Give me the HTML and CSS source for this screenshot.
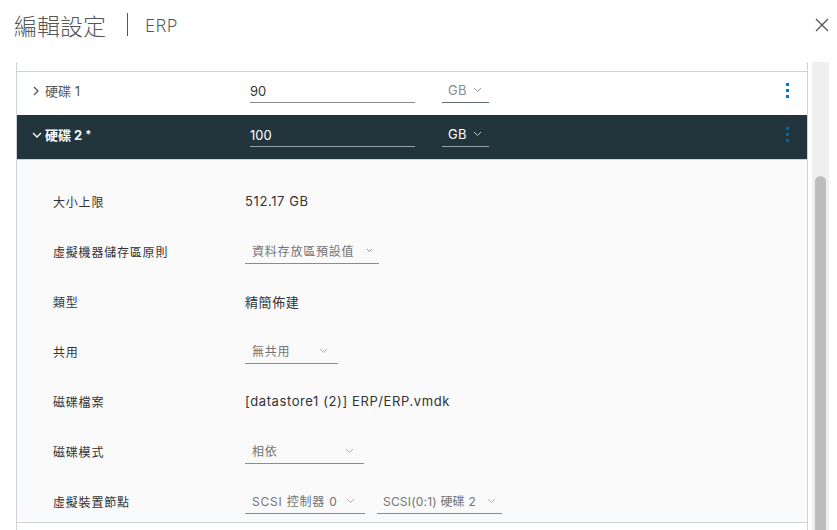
FILE: index.html
```html
<!DOCTYPE html>
<html lang="zh-Hant">
  <head>
    <meta charset="UTF-8" />
    <meta name="viewport" content="width=device-width, initial-scale=1.0" />
    <title>編輯設定 | ERP</title>
    <link rel="stylesheet" href="styles.css">
  </head>
  <body>
    <header class="modal-header">
      <h3 class="modal-title">編輯設定<span class="sep"></span><span class="sub">ERP</span></h3>
      <button class="close" aria-label="關閉">
        <svg width="14" height="14" viewBox="0 0 14 14"><path d="M1 1 L13 13 M13 1 L1 13" stroke="#565656" stroke-width="1.3" fill="none"/></svg>
      </button>
    </header>

    <main class="modal-body">
      <div class="disk-list">
        <div class="row-stub"></div>

        <!-- 硬碟 1 -->
        <div class="disk-row">
          <div class="disk-name">
            <svg class="caret" width="8" height="10" viewBox="0 0 8 10"><path d="M2 1 L6 5 L2 9" stroke="#565656" stroke-width="1.3" fill="none"/></svg>
            硬碟 1
          </div>
          <div class="size-input">90</div>
          <div class="select unit">GB
            <svg class="arrow" width="9" height="6" viewBox="0 0 9 6"><path d="M1 1 L4.5 4.5 L8 1" stroke="#9a9a9a" stroke-width="1" fill="none"/></svg>
          </div>
          <div class="kebab"><i></i><i></i><i></i></div>
        </div>

        <!-- 硬碟 2 -->
        <div class="disk-row open">
          <div class="disk-name">
            <svg class="caret" width="10" height="8" viewBox="0 0 10 8"><path d="M1 2 L5 6 L9 2" stroke="#fff" stroke-width="1.3" fill="none"/></svg>
            硬碟 2 <span class="req">*</span>
          </div>
          <div class="size-input">100</div>
          <div class="select unit">GB
            <svg class="arrow" width="9" height="6" viewBox="0 0 9 6"><path d="M1 1 L4.5 4.5 L8 1" stroke="#c8ccce" stroke-width="1" fill="none"/></svg>
          </div>
          <div class="kebab"><i></i><i></i><i></i></div>
        </div>

        <div class="disk-detail">
          <div class="label">大小上限</div>
          <div class="value">512.17 GB</div>

          <div class="label">虛擬機器儲存區原則</div>
          <div class="value"><div class="select policy">資料存放區預設值
            <svg class="arrow" width="7" height="5" viewBox="0 0 7 5"><path d="M1 1 L3.5 3.5 L6 1" stroke="#8c8c8c" stroke-width="1" fill="none"/></svg></div></div>

          <div class="label">類型</div>
          <div class="value">精簡佈建</div>

          <div class="label">共用</div>
          <div class="value"><div class="select share">無共用
            <svg class="arrow" width="9" height="6" viewBox="0 0 9 6"><path d="M1 1 L4.5 4.5 L8 1" stroke="#b0b0b0" stroke-width="1" fill="none"/></svg></div></div>

          <div class="label">磁碟檔案</div>
          <div class="value">[datastore1 (2)] ERP/ERP.vmdk</div>

          <div class="label">磁碟模式</div>
          <div class="value"><div class="select mode">相依
            <svg class="arrow" width="9" height="6" viewBox="0 0 9 6"><path d="M1 1 L4.5 4.5 L8 1" stroke="#b0b0b0" stroke-width="1" fill="none"/></svg></div></div>

          <div class="label">虛擬裝置節點</div>
          <div class="value pair">
            <div class="select ctrl">SCSI 控制器 0
              <svg class="arrow" width="9" height="6" viewBox="0 0 9 6"><path d="M1 1 L4.5 4.5 L8 1" stroke="#b0b0b0" stroke-width="1" fill="none"/></svg></div>
            <div class="select node">SCSI(0:1) 硬碟 2
              <svg class="arrow" width="9" height="6" viewBox="0 0 9 6"><path d="M1 1 L4.5 4.5 L8 1" stroke="#b0b0b0" stroke-width="1" fill="none"/></svg></div>
          </div>
        </div>
      </div>

      <div class="scrollbar"><div class="thumb"></div></div>
    </main>
  </body>
</html>
```

FILE: styles.css
```css
body {
  margin: 0;
  background-color: white;
  font-family: Inter, "Noto Sans CJK TC", sans-serif;
  color: #333;
  overflow: hidden;
}

.modal-header {
  height: 62px;
  display: flex;
  align-items: center;
  justify-content: space-between;
  padding: 0 8px 0 14px;
  box-sizing: border-box;
}
.modal-title {
  margin: 0;
  display: flex;
  align-items: center;
  font-size: 23px;
  font-weight: 300;
  color: #565656;
  margin-top: -13px;
  font-family: "Noto Sans CJK TC", sans-serif;
}
.sep {
  width: 1px;
  height: 23px;
  background-color: #565656;
  margin: 0 17px 0 21px;
}
.sub {
  font-family: "Noto Sans", sans-serif;
  font-size: 18px;
  font-weight: 300;
  letter-spacing: 0.5px;
}
.close {
  background: none;
  border: none;
  padding: 0;
  margin-top: -10px;
  cursor: pointer;
}

.modal-body {
  display: flex;
  gap: 4px;
  height: 468px;
  padding-left: 16px;
}
.disk-list {
  width: 792px;
  box-sizing: border-box;
  border-left: 1px solid #ccd3d9;
  border-right: 1px solid #ccd3d9;
}
.row-stub {
  height: 9px;
  background-color: white;
}

.disk-row {
  height: 44px;
  box-sizing: border-box;
  border-top: 1px solid #ccd3d9;
  padding: 0 18px 6px 15px;
  display: flex;
  align-items: center;
  font-size: 13px;
  color: #565656;
  background-color: white;
}
.disk-row.open {
  background-color: #22343c;
  color: white;
  font-weight: 700;
  border-top-color: #22343c;
}
.disk-name {
  width: 218px;
  display: flex;
  align-items: center;
  gap: 5px;
}
.disk-row.open .disk-name {
  gap: 3px;
}
.req {
  font-size: 11px;
  align-self: flex-start;
  margin-top: 2px;
}
.size-input {
  width: 165px;
  height: 24px;
  line-height: 24px;
  box-sizing: border-box;
  border-bottom: 1px solid #8c8c8c;
  color: #333;
  font-weight: 400;
  margin-right: 27px;
}
.disk-row.open .size-input {
  color: white;
  border-bottom-color: #9aa3a8;
}

.select {
  height: 26px;
  box-sizing: border-box;
  display: flex;
  align-items: center;
  justify-content: space-between;
  padding: 0 10px 0 7px;
  border-bottom: 1px solid #8c8c8c;
  color: #737373;
  font-size: 12px;
  font-weight: 400;
  letter-spacing: 0.8px;
}
.select.unit {
  width: 47px;
  height: 24px;
  padding: 0 7px 0 6px;
  font-size: 13px;
  color: #8c8c8c;
  border-bottom-color: #5e6a72;
  letter-spacing: 0.3px;
}
.disk-row.open .select.unit {
  color: white;
  border-bottom-color: #9aa3a8;
}
.kebab {
  margin-left: auto;
  display: flex;
  flex-direction: column;
  gap: 3px;
}
.kebab i {
  width: 3px;
  height: 3px;
  background-color: #0079b8;
}
.disk-row.open .kebab i {
  background-color: #0065a0;
}

.disk-detail {
  border-top: 1px solid #ccd3d9;
  border-bottom: 1px solid #ccd3d9;
  background-color: #fafafa;
  display: grid;
  grid-template-columns: 192px 1fr;
  grid-auto-rows: 26px;
  row-gap: 24px;
  padding: 28px 0 8px 36px;
  align-items: center;
}
.label {
  font-size: 12px;
  color: #333;
  letter-spacing: 0.8px;
}
.value {
  font-size: 13px;
  color: #333;
  display: flex;
  gap: 12px;
  letter-spacing: 0.6px;
}
.select.policy {
  width: 134px;
  padding-right: 6px;
}
.select.share {
  width: 93px;
}
.select.mode {
  width: 119px;
}
.select.ctrl {
  width: 120px;
}
.select.node {
  width: 125px;
  padding: 0 6px;
  letter-spacing: 0.2px;
}

.scrollbar {
  width: 17px;
  background-color: #efefef;
  padding-top: 114px;
  box-sizing: border-box;
  display: flex;
  justify-content: center;
}
.thumb {
  width: 11px;
  height: 100%;
  background-color: #bcbcbc;
  border-radius: 6px 6px 0 0;
}
```
